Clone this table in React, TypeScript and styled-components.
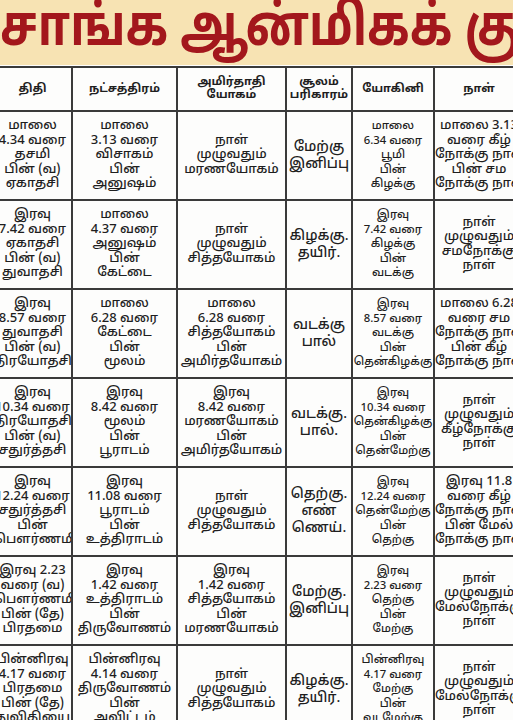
import React, { FC } from 'react';
import styled, { createGlobalStyle } from 'styled-components';

const GlobalStyle = createGlobalStyle`
  html, body {
    margin: 0;
    padding: 0;
    background: #fdfdfc;
  }
  body {
    width: 513px;
    height: 720px;
    overflow: hidden;
    font-family: 'Noto Sans Tamil', 'Lohit Tamil', 'Noto Sans', 'DejaVu Sans', sans-serif;
  }
`;

const Page = styled.div`
  width: 513px;
  height: 720px;
  overflow: hidden;
  background: #fdfdfc;
`;

const Banner = styled.div`
  height: 65px;
  background: #f7e3b3;
  overflow: hidden;
  white-space: nowrap;
`;

const Title = styled.h1`
  margin: 0;
  font-size: 57px;
  line-height: 62px;
  font-weight: 700;
  color: #a3171c;
  transform: scaleX(0.82);
  transform-origin: left center;
`;

const Grid = styled.table`
  margin-top: 1px;
  margin-left: -8px;
  width: 531px;
  table-layout: fixed;
  border-collapse: collapse;
  color: #1f1f1f;
`;

const Head = styled.th`
  height: 42px;
  border: 2px solid #3a3a3a;
  font-size: 11.5px;
  line-height: 13px;
  font-weight: 700;
  text-align: center;
  vertical-align: middle;
  padding: 0;
`;

const Cell = styled.td<{ $size: number; $lead: number }>`
  height: 87px;
  border: 2px solid #3a3a3a;
  font-size: ${(p) => p.$size}px;
  line-height: ${(p) => p.$lead}px;
  font-weight: 500;
  text-align: center;
  vertical-align: middle;
  padding: 0;
  white-space: nowrap;
  overflow: hidden;
`;

const Line = styled.div`
  display: block;
`;

const widths = [79, 105, 109, 66, 82, 90];
const sizes = [13, 13, 13, 14, 11.3, 13];
const leads = [14.5, 14.5, 14.5, 17, 14.5, 14.5];

const headers: string[][] = [
  ['திதி'],
  ['நட்சத்திரம்'],
  ['அமிர்தாதி', 'யோகம்'],
  ['சூலம்', 'பரிகாரம்'],
  ['யோகினி'],
  ['நாள்'],
];

const rows: string[][][] = [
  [
    ['மாலை', '4.34 வரை', 'தசமி', 'பின் (வ)', 'ஏகாதசி'],
    ['மாலை', '3.13 வரை', 'விசாகம்', 'பின்', 'அனுஷம்'],
    ['நாள்', 'முழுவதும்', 'மரணயோகம்'],
    ['மேற்கு', 'இனிப்பு'],
    ['மாலை', '6.34 வரை', 'பூமி', 'பின்', 'கிழக்கு'],
    ['மாலை 3.13', 'வரை கீழ்', 'நோக்கு நாள்', 'பின் சம', 'நோக்கு நாள்'],
  ],
  [
    ['இரவு', '7.42 வரை', 'ஏகாதசி', 'பின் (வ)', 'துவாதசி'],
    ['மாலை', '4.37 வரை', 'அனுஷம்', 'பின்', 'கேட்டை'],
    ['நாள்', 'முழுவதும்', 'சித்தயோகம்'],
    ['கிழக்கு.', 'தயிர்.'],
    ['இரவு', '7.42 வரை', 'கிழக்கு', 'பின்', 'வடக்கு'],
    ['நாள்', 'முழுவதும்', 'சமநோக்கு', 'நாள்'],
  ],
  [
    ['இரவு', '8.57 வரை', 'துவாதசி', 'பின் (வ)', 'திரயோதசி'],
    ['மாலை', '6.28 வரை', 'கேட்டை', 'பின்', 'மூலம்'],
    ['மாலை', '6.28 வரை', 'சித்தயோகம்', 'பின்', 'அமிர்தயோகம்'],
    ['வடக்கு', 'பால்'],
    ['இரவு', '8.57 வரை', 'வடக்கு', 'பின்', 'தென்கிழக்கு'],
    ['மாலை 6.28', 'வரை சம', 'நோக்கு நாள்', 'பின் கீழ்', 'நோக்கு நாள்'],
  ],
  [
    ['இரவு', '10.34 வரை', 'திரயோதசி', 'பின் (வ)', 'சதுர்த்தசி'],
    ['இரவு', '8.42 வரை', 'மூலம்', 'பின்', 'பூராடம்'],
    ['இரவு', '8.42 வரை', 'மரணயோகம்', 'பின்', 'அமிர்தயோகம்'],
    ['வடக்கு.', 'பால்.'],
    ['இரவு', '10.34 வரை', 'தென்கிழக்கு', 'பின்', 'தென்மேற்கு'],
    ['நாள்', 'முழுவதும்', 'கீழ்நோக்கு', 'நாள்'],
  ],
  [
    ['இரவு', '12.24 வரை', 'சதுர்த்தசி', 'பின்', 'பௌர்ணமி'],
    ['இரவு', '11.08 வரை', 'பூராடம்', 'பின்', 'உத்திராடம்'],
    ['நாள்', 'முழுவதும்', 'சித்தயோகம்'],
    ['தெற்கு.', 'எண்', 'ணெய்.'],
    ['இரவு', '12.24 வரை', 'தென்மேற்கு', 'பின்', 'தெற்கு'],
    ['இரவு 11.8', 'வரை கீழ்', 'நோக்கு நாள்', 'பின் மேல்', 'நோக்கு நாள்'],
  ],
  [
    ['இரவு 2.23', 'வரை (வ)', 'பௌர்ணமி', 'பின் (தே)', 'பிரதமை'],
    ['இரவு', '1.42 வரை', 'உத்திராடம்', 'பின்', 'திருவோணம்'],
    ['இரவு', '1.42 வரை', 'சித்தயோகம்', 'பின்', 'மரணயோகம்'],
    ['மேற்கு.', 'இனிப்பு'],
    ['இரவு', '2.23 வரை', 'தெற்கு', 'பின்', 'மேற்கு'],
    ['நாள்', 'முழுவதும்', 'மேல்நோக்கு', 'நாள்'],
  ],
  [
    ['பின்னிரவு', '4.17 வரை', 'பிரதமை', 'பின் (தே)', 'துவிதியை'],
    ['பின்னிரவு', '4.14 வரை', 'திருவோணம்', 'பின்', 'அவிட்டம்'],
    ['நாள்', 'முழுவதும்', 'சித்தயோகம்'],
    ['கிழக்கு.', 'தயிர்.'],
    ['பின்னிரவு', '4.17 வரை', 'மேற்கு', 'பின்', 'வடமேற்கு'],
    ['நாள்', 'முழுவதும்', 'மேல்நோக்கு', 'நாள்'],
  ],
];

const App: FC = () => {
  return (
    <Page>
      <GlobalStyle />
      <Banner>
        <Title>சாங்க ஆன்மிகக் குறிப்புகள்</Title>
      </Banner>
      <Grid>
        <colgroup>
          {widths.map((w, i) => (
            <col key={i} style={{ width: w }} />
          ))}
        </colgroup>
        <thead>
          <tr>
            {headers.map((h, i) => (
              <Head key={i}>
                {h.map((t, j) => (
                  <Line key={j}>{t}</Line>
                ))}
              </Head>
            ))}
          </tr>
        </thead>
        <tbody>
          {rows.map((row, r) => (
            <tr key={r}>
              {row.map((cell, c) => (
                <Cell key={c} $size={sizes[c]} $lead={leads[c]}>
                  {cell.map((t, j) => (
                    <Line key={j}>{t}</Line>
                  ))}
                </Cell>
              ))}
            </tr>
          ))}
        </tbody>
      </Grid>
    </Page>
  );
};

export default App;
